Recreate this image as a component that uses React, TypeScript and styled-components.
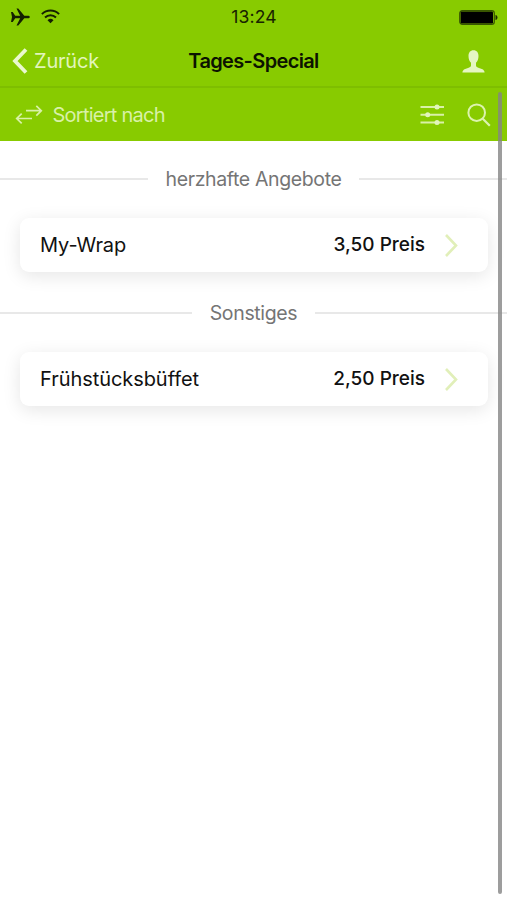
import React from "react";
import styled, { createGlobalStyle } from "styled-components";

const GlobalStyle = createGlobalStyle`
  * { box-sizing: border-box; }
  html, body { margin: 0; padding: 0; background: #fff; overflow: hidden; }
  body { font-family: Inter, "Liberation Sans", sans-serif; }
  svg { display: block; flex: none; }
`;

const Screen = styled.div`
  position: relative;
  width: 507px;
  height: 900px;
  display: flex;
  flex-direction: column;
  background: #fff;
  overflow: hidden;
`;

const StatusBar = styled.div`
  display: grid;
  grid-template-columns: 1fr auto 1fr;
  align-items: center;
  height: 34px;
  padding: 0 9px 0 10px;
  background: #88cb00;
`;

const StatusIcons = styled.div<{ $end?: boolean }>`
  display: flex;
  gap: 11px;
  justify-content: ${(p) => (p.$end ? "flex-end" : "flex-start")};
`;

const Clock = styled.span`
  font-size: 17.5px;
  line-height: 34px;
  letter-spacing: 0.2px;
  color: #182400;
`;

const NavBar = styled.header`
  display: grid;
  grid-template-columns: 1fr auto 1fr;
  align-items: center;
  height: 54px;
  padding: 2px 22px 0;
  background: #88cb00;
  border-bottom: 2px solid #7ebe00;
`;

const BackButton = styled.div`
  display: flex;
  align-items: center;
  gap: 6px;
  margin-left: -10px;
  font-size: 20px;
  line-height: 26px;
  letter-spacing: -0.2px;
  color: #e2f5bb;
`;

const Title = styled.h1`
  margin: 0;
  font-size: 20px;
  line-height: 26px;
  font-weight: 600;
  letter-spacing: -0.65px;
  color: #0c1300;
`;

const ProfileButton = styled.div`
  display: flex;
  justify-content: flex-end;
`;

const Toolbar = styled.div`
  display: flex;
  align-items: center;
  height: 53px;
  padding: 0 16px 0 15px;
  background: #88cb00;
`;

const SortLabel = styled.span`
  flex: 1;
  margin-left: 9.5px;
  font-size: 20px;
  line-height: 26px;
  letter-spacing: -0.75px;
  color: #d9f1a8;
`;

const ToolIcons = styled.div`
  display: flex;
  align-items: center;
  gap: 22px;
`;

const List = styled.main`
  display: flex;
  flex-direction: column;
  padding-top: 26px;
`;

const Section = styled.section`
  display: flex;
  flex-direction: column;
  height: 134.4px;
`;

const Divider = styled.div`
  display: flex;
  align-items: center;
  height: 24px;
  &::before, &::after {
    content: "";
    flex: 1;
    height: 2px;
    background: #e8e8e8;
  }
`;

const SectionName = styled.h2<{ $tracking: number }>`
  margin: 0 18px;
  font-size: 19.5px;
  line-height: 24px;
  font-weight: 400;
  letter-spacing: ${(p) => p.$tracking}px;
  color: #757575;
`;

const Card = styled.div`
  display: flex;
  align-items: center;
  height: 54px;
  margin: 27px 19px 0 20px;
  padding: 0 29px 0 20px;
  border-radius: 9px;
  background: #fff;
  box-shadow: 0 4px 18px rgba(0, 0, 0, 0.1);
`;

const ItemName = styled.span<{ $tracking: number }>`
  flex: 1;
  font-size: 20px;
  line-height: 26px;
  letter-spacing: ${(p) => p.$tracking}px;
  color: #111;
`;

const Price = styled.span`
  margin-right: 20px;
  font-size: 19px;
  line-height: 26px;
  font-weight: 500;
  letter-spacing: 0;
  color: #111;
`;

const ScrollThumb = styled.div`
  position: absolute;
  top: 92px;
  right: 5px;
  width: 4px;
  height: 802px;
  border-radius: 2px;
  background: rgba(132, 132, 132, 0.8);
`;

const sections = [
  { name: "herzhafte Angebote", tracking: -0.37, item: "My-Wrap", itemTracking: -0.1, price: "3,50 Preis" },
  { name: "Sonstiges", tracking: -0.35, item: "Frühstücksbüffet", itemTracking: -0.06, price: "2,50 Preis" },
];

const Plane = () => (
  <svg width="20" height="18" viewBox="0 0 20 18" fill="#142000">
    <path d="M1 4h1.700l2.500 3.700h5L6.500.6h1.800l6 7.100h3.500c1.200 0 2 .5 2 1.300s-.8 1.300-2 1.300h-3.500l-6 7.100H6.500l3.700-7.100h-5L2.700 14H1l1-5Z" />
  </svg>
);

const Wifi = () => (
  <svg width="19" height="17" viewBox="0 0 19 17" fill="none" stroke="#142000" strokeWidth="2">
    <path d="M.9 6.100a12.300 12.300 0 0 1 17.200 0M4 9.500a7.900 7.900 0 0 1 11 0" />
    <path d="M9.500 15.200 6.500 12.200a4.300 4.300 0 0 1 6 0Z" fill="#142000" stroke="none" />
  </svg>
);

const Battery = () => (
  <svg width="39" height="15" viewBox="0 0 39 15">
    <rect x=".7" y=".7" width="34.600" height="13.600" rx="2.600" fill="none" stroke="#385600" strokeWidth="1.200" />
    <rect x="1.600" y="1.600" width="32.400" height="11.800" rx="1.200" fill="#000" />
    <path d="M36.500 5c1.400.3 2 1.300 2 2.500s-.6 2.200-2 2.500Z" fill="#1c2b00" />
  </svg>
);

const Back = () => (
  <svg width="16" height="26" viewBox="0 0 16 26" fill="none" stroke="#eaf8cf" strokeWidth="3.800">
    <path d="M14 1.500 3 13l11 11.500" />
  </svg>
);

const Person = () => (
  <svg width="23" height="23" viewBox="0 0 23 23" fill="#e5f6c3">
    <path d="M11.500.3c3.300 0 5 2.300 5 5.700 0 3-.9 5.200-2.500 6.800v2.800c0 1.100.8 1.700 2.300 2.200l3.500 1.200c1.900.7 2.600 1.800 2.800 3.600H.4c.2-1.800.9-2.900 2.800-3.600L6.700 17.800C8.200 17.300 9 16.700 9 15.600v-2.800C7.400 11.200 6.500 9 6.500 6c0-3.400 1.700-5.700 5-5.700Z" />
  </svg>
);

const Swap = () => (
  <svg width="28" height="20" viewBox="0 0 28 20" fill="none" stroke="#d9f1a8" strokeWidth="1.700">
    <path d="M11 5.700h15.200M21.300.8l5 4.900-5 4.900M17 13.500H1.800M6.700 8.600l-5 4.900 5 4.900" />
  </svg>
);

const Sliders = () => (
  <svg width="25" height="22" viewBox="0 0 25 22" stroke="#d9f1a8" strokeWidth="2" fill="#e2f5bb">
    <path d="M.5 3h23.500M.5 10.800h23.500M.5 18.600h23.500" />
    <g stroke="none"><circle cx="17" cy="3" r="2.500" /><circle cx="7.700" cy="10.800" r="2.500" /><circle cx="17" cy="18.600" r="2.500" /></g>
  </svg>
);

const Search = () => (
  <svg width="24" height="24" viewBox="0 0 24 24" fill="none" stroke="#dcf3ae" strokeWidth="2">
    <circle cx="9.700" cy="9.700" r="8.300" />
    <path d="m15.800 15.800 7 7" strokeWidth="2.200" />
  </svg>
);

const Chevron = () => (
  <svg width="14" height="24" viewBox="0 0 14 24" fill="none" stroke="#e1efb9" strokeWidth="2.600">
    <path d="m1 2 10 10.500L1 23" />
  </svg>
);

export default function App() {
  return (
    <>
      <GlobalStyle />
      <Screen>
        <StatusBar>
          <StatusIcons><Plane /><Wifi /></StatusIcons>
          <Clock>13:24</Clock>
          <StatusIcons $end><Battery /></StatusIcons>
        </StatusBar>
        <NavBar>
          <BackButton><Back />Zurück</BackButton>
          <Title>Tages-Special</Title>
          <ProfileButton><Person /></ProfileButton>
        </NavBar>
        <Toolbar>
          <Swap />
          <SortLabel>Sortiert nach</SortLabel>
          <ToolIcons><Sliders /><Search /></ToolIcons>
        </Toolbar>
        <List>
          {sections.map((s) => (
            <Section key={s.name}>
              <Divider><SectionName $tracking={s.tracking}>{s.name}</SectionName></Divider>
              <Card>
                <ItemName $tracking={s.itemTracking}>{s.item}</ItemName>
                <Price>{s.price}</Price>
                <Chevron />
              </Card>
            </Section>
          ))}
        </List>
        <ScrollThumb />
      </Screen>
    </>
  );
}
